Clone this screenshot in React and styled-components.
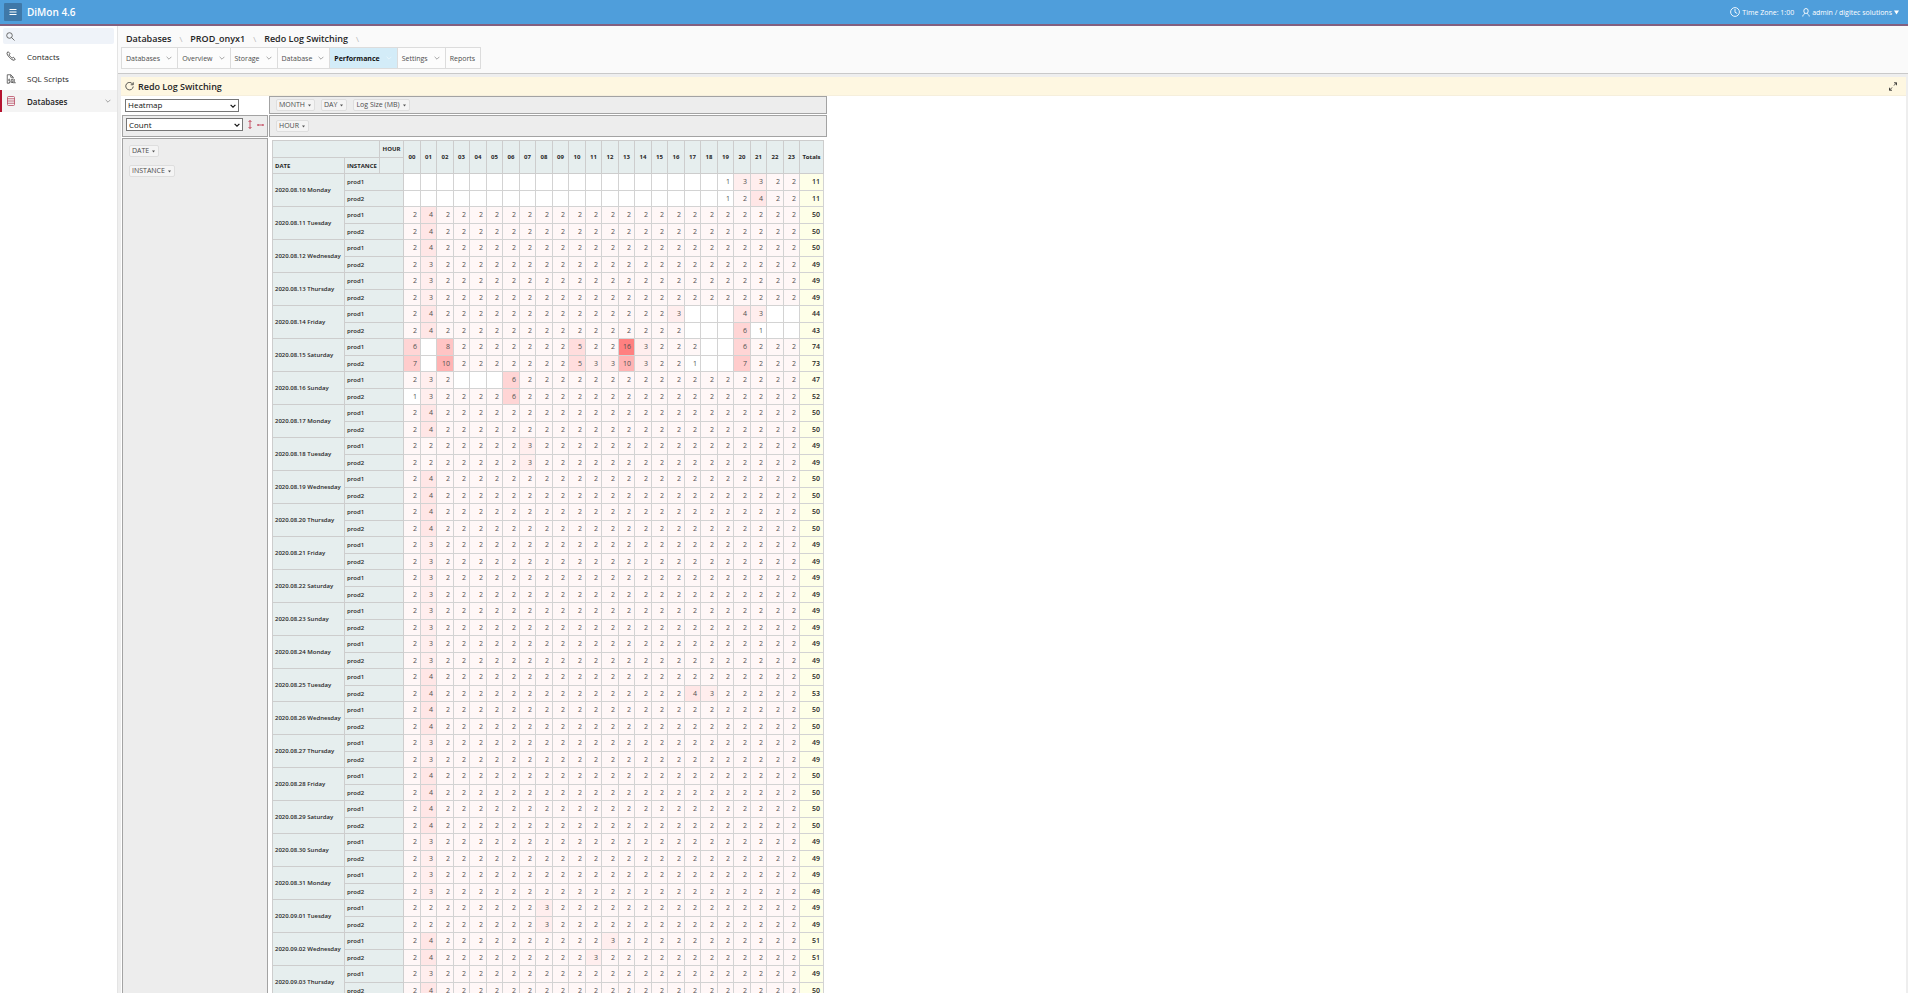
import React from 'react'
import styled, { createGlobalStyle } from 'styled-components';

const GlobalStyle = createGlobalStyle`
  *, *::before, *::after {
    box-sizing: border-box;
  }
  body {
    margin: 0;
    background-color: #eeeeee;
    color: #262626;
    font-family: "Open Sans", "Noto Sans", sans-serif;
    font-size: 8px;
  }
  button, input, select {
    font-family: inherit;
    color: inherit;
  }
`;

const Shell = styled.div`
  display: flex;
  flex-direction: column;
  height: 100vh;
  overflow: hidden;
`;

const TopBar = styled.header`
  display: flex;
  flex: none;
  align-items: center;
  height: 26px;
  padding: 0 9px 0 4px;
  color: white;
  background-color: #4f9edb;
  border-bottom: 2px solid #83607f;
`;

const MenuButton = styled.button`
  display: flex;
  align-items: center;
  justify-content: center;
  width: 18px;
  height: 18px;
  padding: 0;
  border: none;
  border-radius: 1px;
  background-color: #3f78a8;
`;

const Brand = styled.span`
  flex: 1;
  margin-left: 5px;
  font-size: 10px;
  font-weight: 600;
`;

const TopLink = styled.a`
  display: flex;
  align-items: center;
  gap: 2px;
  margin-left: 8px;
  color: white;
  font-size: 7px;
  text-decoration: none;
`;

const Body = styled.div`
  display: flex;
  flex: 1;
  min-height: 0;
`;

const SideBar = styled.nav`
  flex: none;
  width: 118px;
  background-color: white;
  border-right: 1px solid #e4e4e4;
`;

const SearchBox = styled.label`
  display: flex;
  align-items: center;
  height: 16px;
  margin: 2px 3px 1px;
  padding-left: 3px;
  border-radius: 2px;
  background-color: #eff3f9;
`;

const SearchInput = styled.input`
  flex: 1;
  min-width: 0;
  padding: 0 4px;
  border: none;
  outline: none;
  background: transparent;
  font-size: 8px;
`;

const SideItem = styled.a`
  display: flex;
  align-items: center;
  height: 23px;
  padding: 0 6px 0 4px;
  color: #262626;
  font-weight: ${({active}) => (active ? "600" : "400")};
  text-decoration: none;
  background-color: ${({active}) => (active ? "#f4f4f4" : "white")};
  border-left: 2px solid ${({active}) => (active ? "#b5122f" : "white")};
`;

const SideItems = styled.div`
  display: grid;
  grid-template-rows: 22px 23px 22px;

  ${SideItem} {
    height: auto;
  }
`;

const SideIcon = styled.span`
  display: flex;
  width: 21px;
`;

const SideLabel = styled.span`
  flex: 1;
`;

const Main = styled.main`
  display: flex;
  flex-direction: column;
  flex: 1;
  min-width: 0;
`;

const PageHead = styled.div`
  flex: none;
  height: 48px;
  padding: 4px 3px 0;
  background-color: #fafafa;
  border-bottom: 1px solid #c9c9c9;
`;

const Crumbs = styled.div`
  display: flex;
  align-items: center;
  height: 17px;
  padding-left: 5px;
`;

const Crumb = styled.a`
  color: #262626;
  font-size: 9px;
  font-weight: 600;
  text-decoration: none;
  white-space: nowrap;

  &::after {
    content: "\\\\";
    margin: 0 8px;
    color: #b5b5b5;
    font-size: 8px;
    font-weight: 400;
  }
`;

const Tabs = styled.div`
  display: flex;
  width: max-content;
  border: 1px solid #dcdcdc;
`;

const Tab = styled.button`
  display: flex;
  align-items: center;
  gap: 6px;
  height: 20px;
  padding: 0 5px 0 4px;
  border: none;
  border-left: ${({first}) => (first ? "none" : "1px solid #dcdcdc")};
  color: ${({active}) => (active ? "#111111" : "#4c4c4c")};
  background-color: ${({active}) => (active ? "#d3ecf8" : "#fcfcfc")};
  font-size: 7px;
  font-weight: ${({active}) => (active ? "700" : "400")};
`;

const Region = styled.section`
  flex: 1;
  min-height: 0;
  margin: 3px 2px 0 3px;
  background-color: white;
  overflow: hidden;
`;

const RegionHead = styled.div`
  display: flex;
  align-items: center;
  gap: 4px;
  height: 19px;
  padding: 0 9px 0 4px;
  background-color: #fef7e1;
  border-bottom: 1px solid #f6efdc;
`;

const RegionTitle = styled.h2`
  flex: 1;
  margin: 0;
  font-size: 9px;
  font-weight: 600;
`;

const IconButton = styled.button`
  display: flex;
  padding: 0;
  border: none;
  background: transparent;
`;

const Pivot = styled.div`
  display: grid;
  grid-template-columns: 146px max-content;
  grid-template-rows: 18px 22px auto;
  gap: 1px;
  width: max-content;
  padding-left: 1px;
`;

const RendererCell = styled.div`
  display: flex;
  align-items: center;
  padding: 0 3px;
`;

const FieldBox = styled.div`
  display: flex;
  flex-direction: ${({vertical}) => (vertical ? "column" : "row")};
  align-items: ${({vertical}) => (vertical ? "flex-start" : "center")};
  gap: ${({vertical}) => (vertical ? "8px" : "6px")};
  padding: ${({vertical}) => (vertical ? "6px" : "0 6px")};
  background-color: #ededed;
  border: 1px solid #a3a3a3;
`;

const ValueBox = styled(FieldBox)`
  gap: 5px;
  padding: 0 3px 3px;
`;

const Field = styled.button`
  display: flex;
  align-items: center;
  gap: 3px;
  height: 12px;
  padding: 0 3px 0 2px;
  border: 1px solid #dedede;
  border-radius: 2px;
  color: #4c4c4c;
  background-color: #f4f4f4;
  font-size: 7px;
  line-height: 10px;
  white-space: nowrap;
`;

const SelectWrap = styled.span`
  position: relative;
  display: flex;
  flex: none;
  width: ${({wide}) => (wide ? "117px" : "114px")};
  height: 13px;

  svg {
    position: absolute;
    top: 4px;
    right: 3px;
    pointer-events: none;
  }
`;

const SelectBox = styled.select`
  width: 100%;
  padding: 0 2px;
  border: 1px solid #767676;
  border-radius: 0;
  appearance: none;
  color: #111111;
  background-color: white;
  font-size: 8px;
  line-height: 10px;
`;

const TableCell = styled.div`
  padding: 2px 3px;
  background-color: white;
`;

const Table = styled.table`
  width: 552px;
  table-layout: fixed;
  border-collapse: collapse;
  font-size: 6px;
  line-height: 8px;
`;

const Col = styled.col`
  width: ${({size}) => size}px;
`;

const Row = styled.tr`
  height: ${({tall}) => (tall ? "17px" : "16px")};
`;

const HeadCell = styled.th`
  padding: 0;
  padding-left: ${({left}) => (left ? "2px" : "0")};
  border: 1px solid #cdcdcd;
  background-color: #e6eeee;
  font-weight: 700;
  text-align: ${({left}) => (left ? "left" : "center")};
  white-space: nowrap;
`;

const RowLabel = styled.th`
  padding: 0 0 0 2px;
  border: 1px solid #cdcdcd;
  background-color: #e6eeee;
  font-weight: 600;
  text-align: left;
  vertical-align: middle;
  white-space: nowrap;
`;

const HeatCell = styled.td`
  padding: 0 3px 0 0;
  border: 1px solid #d3d3d3;
  color: #505050;
  background-color: rgb(255, ${({shade}) => shade}, ${({shade}) => shade});
  font-size: 7px;
  text-align: right;
`;

const TotalCell = styled(HeatCell)`
  color: #262626;
  background-color: #feffe8;
  font-weight: 600;
`;

const hourNames = Array.from({ length: 24 }, (_, i) => String(i).padStart(2, '0'));

// every hour has 2 switches unless it is listed here, null is an empty cell
const hours = (changes = {}) => hourNames.map((_, i) => (i in changes ? changes[i] : 2));

const emptyUntil19 = Object.fromEntries(hourNames.slice(0, 19).map((_, i) => [i, null]));

const days = [
  ['2020.08.10 Monday', { ...emptyUntil19, 19: 1, 20: 3, 21: 3 }, { ...emptyUntil19, 19: 1, 21: 4 }],
  ['2020.08.11 Tuesday', { 1: 4 }, { 1: 4 }],
  ['2020.08.12 Wednesday', { 1: 4 }, { 1: 3 }],
  ['2020.08.13 Thursday', { 1: 3 }, { 1: 3 }],
  ['2020.08.14 Friday',
    { 1: 4, 16: 3, 17: null, 18: null, 19: null, 20: 4, 21: 3, 22: null, 23: null },
    { 1: 4, 17: null, 18: null, 19: null, 20: 6, 21: 1, 22: null, 23: null }],
  ['2020.08.15 Saturday',
    { 0: 6, 1: null, 2: 8, 10: 5, 13: 16, 14: 3, 18: null, 19: null, 20: 6 },
    { 0: 7, 1: null, 2: 10, 10: 5, 11: 3, 12: 3, 13: 10, 14: 3, 17: 1, 18: null, 19: null, 20: 7 }],
  ['2020.08.16 Sunday', { 1: 3, 3: null, 4: null, 5: null, 6: 6 }, { 0: 1, 1: 3, 6: 6 }],
  ['2020.08.17 Monday', { 1: 4 }, { 1: 4 }],
  ['2020.08.18 Tuesday', { 7: 3 }, { 7: 3 }],
  ['2020.08.19 Wednesday', { 1: 4 }, { 1: 4 }],
  ['2020.08.20 Thursday', { 1: 4 }, { 1: 4 }],
  ['2020.08.21 Friday', { 1: 3 }, { 1: 3 }],
  ['2020.08.22 Saturday', { 1: 3 }, { 1: 3 }],
  ['2020.08.23 Sunday', { 1: 3 }, { 1: 3 }],
  ['2020.08.24 Monday', { 1: 3 }, { 1: 3 }],
  ['2020.08.25 Tuesday', { 1: 4 }, { 1: 4, 17: 4, 18: 3 }],
  ['2020.08.26 Wednesday', { 1: 4 }, { 1: 4 }],
  ['2020.08.27 Thursday', { 1: 3 }, { 1: 3 }],
  ['2020.08.28 Friday', { 1: 4 }, { 1: 4 }],
  ['2020.08.29 Saturday', { 1: 4 }, { 1: 4 }],
  ['2020.08.30 Sunday', { 1: 3 }, { 1: 3 }],
  ['2020.08.31 Monday', { 1: 3 }, { 1: 3 }],
  ['2020.09.01 Tuesday', { 8: 3 }, { 8: 3 }],
  ['2020.09.02 Wednesday', { 1: 4, 12: 3 }, { 1: 4, 11: 3 }],
  ['2020.09.03 Thursday', { 1: 3 }, { 1: 4 }],
];

const shadeOf = (value) => (value === null ? 255 : 255 - Math.round((127 * (value - 1)) / 15));

const Chevron = ({color = "#6b6b6b", size = 7, weight = 1}) => (
  <svg width={size} height={size} viewBox="0 0 10 10" fill="none" stroke={color} strokeWidth={weight}>
    <path d="M1 3 L5 7 L9 3" />
  </svg>
)

const Caret = () => (
  <svg width="3" height="3" viewBox="0 0 6 6"><path d="M0 1 H6 L3 5 Z" fill="#555" /></svg>
)

const FieldButton = ({name}) => (
  <Field type="button">{name}<Caret /></Field>
)

const DropDown = ({label, value, wide}) => (
  <SelectWrap wide={wide}>
    <SelectBox aria-label={label} defaultValue={value}>
      <option>{value}</option>
    </SelectBox>
    <Chevron size={6} color="#111" weight={2} />
  </SelectWrap>
)

const InstanceRow = ({day, name, changes}) => {
  const values = hours(changes);
  return (
    <Row tall={!!day}>
      {day && <RowLabel scope="rowgroup" rowSpan={2}>{day}</RowLabel>}
      <RowLabel scope="row" colSpan={2}>{name}</RowLabel>
      {values.map((value, i) => (
        <HeatCell key={i} shade={shadeOf(value)}>{value}</HeatCell>
      ))}
      <TotalCell>{values.reduce((sum, value) => sum + value, 0)}</TotalCell>
    </Row>
  )
}

const PivotTable = () => (
  <Table>
    <colgroup>
      <Col size={72} />
      <Col size={35} />
      <Col size={24} />
      {hourNames.map((hour, i) => <Col key={hour} size={i % 2 ? 16 : 17} />)}
      <Col size={24} />
    </colgroup>
    <thead>
      <Row tall>
        <HeadCell colSpan={2} />
        <HeadCell>HOUR</HeadCell>
        {hourNames.map((hour) => <HeadCell key={hour} rowSpan={2}>{hour}</HeadCell>)}
        <HeadCell rowSpan={2}>Totals</HeadCell>
      </Row>
      <Row>
        <HeadCell left>DATE</HeadCell>
        <HeadCell left>INSTANCE</HeadCell>
        <HeadCell />
      </Row>
    </thead>
    <tbody>
      {days.map(([day, prod1, prod2]) => (
        <React.Fragment key={day}>
          <InstanceRow day={day} name="prod1" changes={prod1} />
          <InstanceRow name="prod2" changes={prod2} />
        </React.Fragment>
      ))}
    </tbody>
  </Table>
)

const tabs = ['Databases', 'Overview', 'Storage', 'Database', 'Performance', 'Settings', 'Reports'];

const App = () => {
  return (
    <Shell>
      <GlobalStyle />
      <TopBar>
        <MenuButton type="button" aria-label="Menu">
          <svg width="8" height="8" viewBox="0 0 8 8" stroke="white" strokeWidth="1">
            <path d="M0.5 1.5 H7.5 M0.5 4 H7.5 M0.5 6.5 H7.5" />
          </svg>
        </MenuButton>
        <Brand>DiMon 4.6</Brand>
        <TopLink href="#timezone">
          <svg width="10" height="10" viewBox="0 0 20 20" fill="none" stroke="white" strokeWidth="1.8">
            <circle cx="10" cy="10" r="8.8" />
            <path d="M10 4 V10.5 L14.5 13" />
          </svg>
          Time Zone: 1:00
        </TopLink>
        <TopLink href="#account">
          <svg width="8" height="9" viewBox="0 0 16 18" fill="none" stroke="white" strokeWidth="1.8">
            <ellipse cx="8" cy="6" rx="4.4" ry="5" />
            <path d="M5.5 10.5 C5.5 13 1.5 12.5 1.5 17 M10.5 10.5 C10.5 13 14.5 12.5 14.5 17" />
          </svg>
          admin / digitec solutions
          <svg width="5" height="5" viewBox="0 0 10 10"><path d="M0 1 H10 L5 9 Z" fill="white" /></svg>
        </TopLink>
      </TopBar>
      <Body>
        <SideBar>
          <SearchBox>
            <svg width="9" height="9" viewBox="0 0 18 18" fill="none" stroke="#4c4c4c" strokeWidth="1.6">
              <circle cx="7" cy="7" r="5.6" />
              <path d="M11 11 L17 17" />
            </svg>
            <SearchInput type="search" aria-label="Search" />
          </SearchBox>
          <SideItems>
            <SideItem href="#contacts">
              <SideIcon>
                <svg width="10" height="10" viewBox="0 0 20 20" fill="none" stroke="#4c4c4c" strokeWidth="1.8" strokeLinejoin="round">
                  <path d="M4.5 1.5 L2 3.5 C1 8 11 19 16.5 18.5 L18.5 16 L14.5 12.5 L12.5 14 C10 13 7 10 6.3 7.5 L8 5.5 Z" />
                </svg>
              </SideIcon>
              <SideLabel>Contacts</SideLabel>
            </SideItem>
            <SideItem href="#scripts">
              <SideIcon>
                <svg width="10" height="10" viewBox="0 0 20 20" fill="none" stroke="#4c4c4c" strokeWidth="1.6">
                  <path d="M7 18.5 H2.5 V1.5 H9.5 L14.5 6.5 V9 M9.5 1.5 V6.5 H14.5" />
                  <path d="M8 10.5 H5.5 V13.5 H8 V17 H5.5 M10.5 10.5 H14 V17 H10.5 Z M13 15 L15 18.5 M16.5 10 V17.5 H19.5" />
                </svg>
              </SideIcon>
              <SideLabel>SQL Scripts</SideLabel>
            </SideItem>
            <SideItem href="#databases" active>
              <SideIcon>
                <svg width="10" height="10" viewBox="0 0 20 20" fill="none" stroke="#b5405a" strokeWidth="1.5">
                  <rect x="3" y="1" width="14" height="18" rx="2" />
                  <path d="M3 5.5 H17 M3 10 H17 M3 14.5 H17" />
                </svg>
              </SideIcon>
              <SideLabel>Databases</SideLabel>
              <Chevron size={6} />
            </SideItem>
          </SideItems>
        </SideBar>
        <Main>
          <PageHead>
            <Crumbs>
              <Crumb href="#databases">Databases</Crumb>
              <Crumb href="#onyx1">PROD_onyx1</Crumb>
              <Crumb href="#redo">Redo Log Switching</Crumb>
            </Crumbs>
            <Tabs>
              {tabs.map((tab, i) => (
                <Tab key={tab} type="button" first={i === 0} active={tab === 'Performance'}>
                  {tab}
                  {tab !== 'Reports' && <Chevron size={6} color={tab === 'Performance' ? "#f4fbff" : undefined} />}
                </Tab>
              ))}
            </Tabs>
          </PageHead>
          <Region>
            <RegionHead>
              <IconButton type="button" aria-label="Refresh">
                <svg width="9" height="9" viewBox="0 0 18 18" fill="none" stroke="#333" strokeWidth="1.6">
                  <path d="M15.5 4.5 A7.5 7.5 0 1 0 16.5 9 M16.5 0.5 V5.5 H11.5" />
                </svg>
              </IconButton>
              <RegionTitle>Redo Log Switching</RegionTitle>
              <IconButton type="button" aria-label="Maximize">
                <svg width="8" height="9" viewBox="0 0 16 18" fill="none" stroke="#222" strokeWidth="1.6">
                  <path d="M10 1.5 H15 V6.5 M15 1.5 L10 7 M1 11.5 V16.5 H6 M1 16.5 L6 11" />
                </svg>
              </IconButton>
            </RegionHead>
            <Pivot>
              <RendererCell>
                <DropDown label="Renderer" value="Heatmap" />
              </RendererCell>
              <FieldBox>
                <FieldButton name="MONTH" />
                <FieldButton name="DAY" />
                <FieldButton name="Log Size (MB)" />
              </FieldBox>
              <ValueBox>
                <DropDown label="Aggregator" value="Count" wide />
                <IconButton type="button" aria-label="Row order">
                  <svg width="4" height="9" viewBox="0 0 8 18" fill="none" stroke="#b5122f" strokeWidth="1.4">
                    <path d="M4 1 V17 M1 4 L4 1 L7 4 M1 14 L4 17 L7 14" />
                  </svg>
                </IconButton>
                <IconButton type="button" aria-label="Column order">
                  <svg width="7" height="4" viewBox="0 0 14 8" fill="none" stroke="#b5122f" strokeWidth="1.4">
                    <path d="M1 4 H13 M3 2 L1 4 L3 6 M11 2 L13 4 L11 6" />
                  </svg>
                </IconButton>
              </ValueBox>
              <FieldBox>
                <FieldButton name="HOUR" />
              </FieldBox>
              <FieldBox vertical>
                <FieldButton name="DATE" />
                <FieldButton name="INSTANCE" />
              </FieldBox>
              <TableCell>
                <PivotTable />
              </TableCell>
            </Pivot>
          </Region>
        </Main>
      </Body>
    </Shell>
  )
}

export default App
